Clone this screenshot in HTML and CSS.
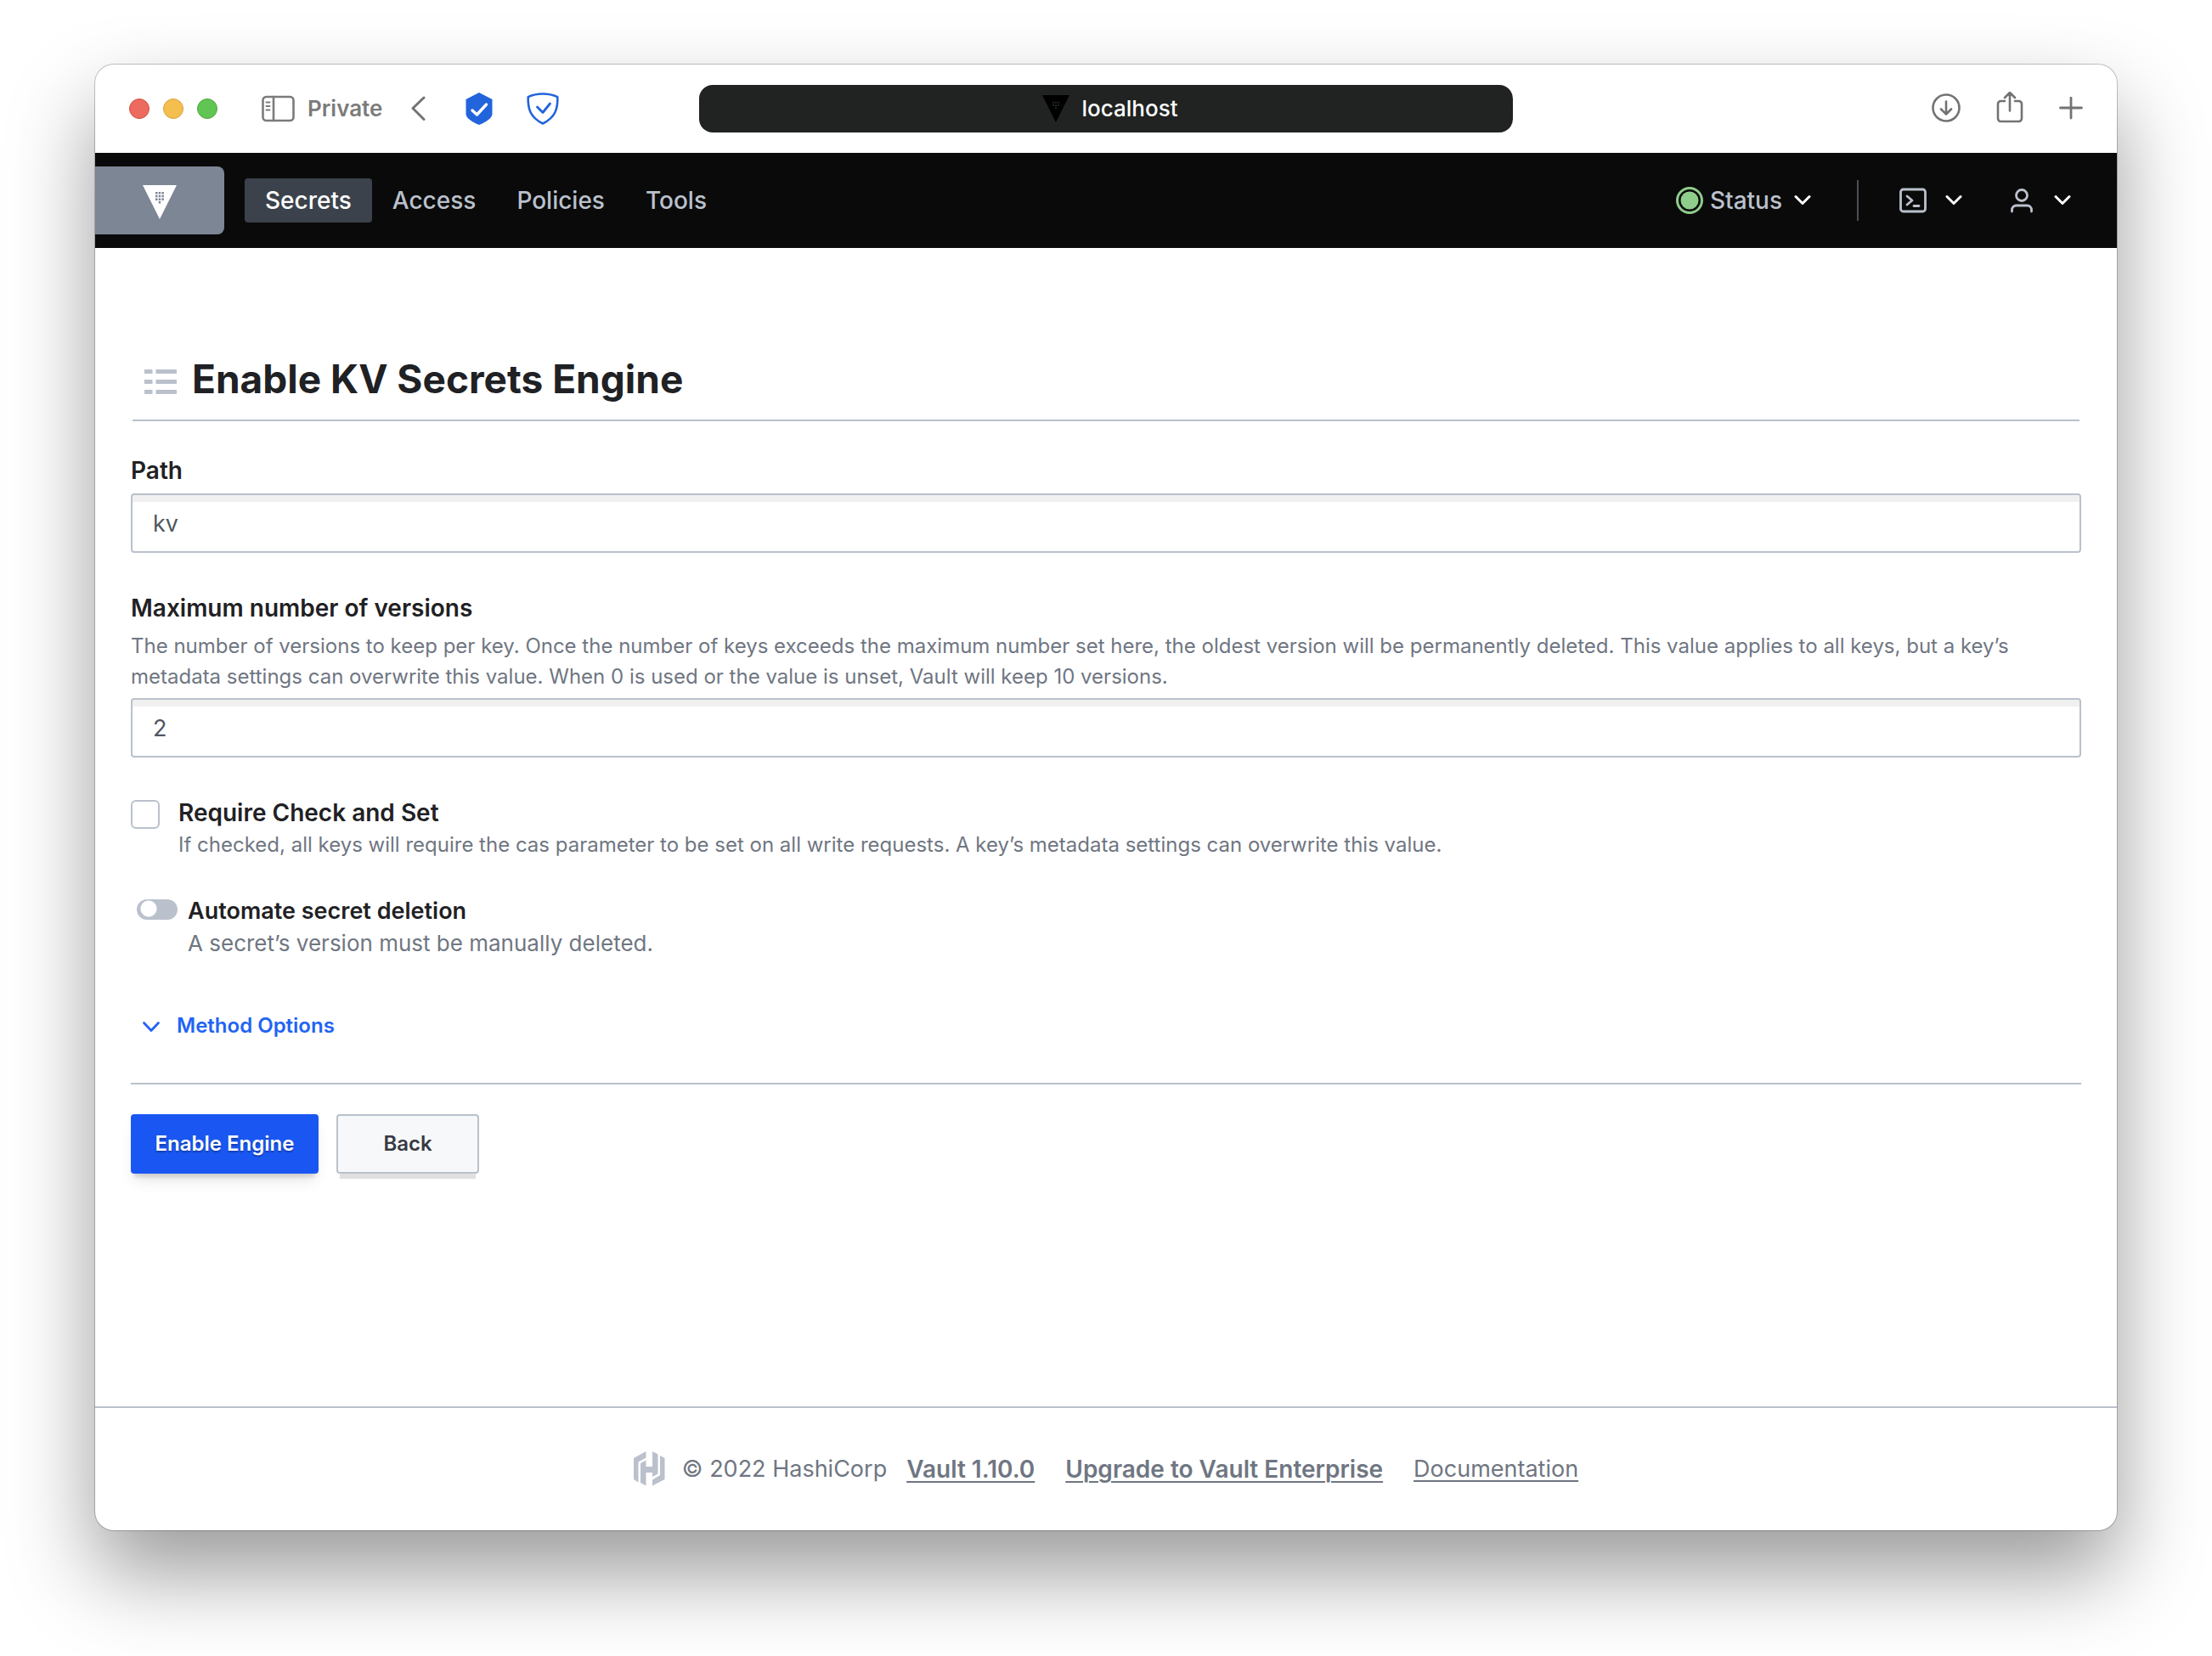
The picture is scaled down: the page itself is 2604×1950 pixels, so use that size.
FILE: index.html
```html
<!DOCTYPE html>
<html lang="en">
<head>
<meta charset="utf-8">
<meta name="viewport" content="width=device-width, initial-scale=1">
<title>Vault</title>
<link rel="stylesheet" href="styles.css">
</head>
<body>
<div class="window">
  <header class="toolbar">
    <div class="toolbar-left">
      <div class="lights"><span class="light red"></span><span class="light amber"></span><span class="light green"></span></div>
      <button class="private" type="button">
        <svg class="icon-sidebar" width="40" height="32" viewBox="0 0 40 32" fill="none" stroke="currentColor" stroke-width="2.6" stroke-linecap="round"><rect x="1.5" y="2" width="36" height="28" rx="4"/><path d="M14 2v28"/><path d="M5.500 8.500h4M5.500 13h4M5.500 17.500h4" stroke-width="2"/></svg>
        Private
      </button>
      <button class="tool back" type="button" aria-label="Go back"><svg width="18" height="32" viewBox="0 0 18 32" fill="none" stroke="currentColor" stroke-width="3" stroke-linecap="round" stroke-linejoin="round"><path d="M15 3L2 15.500l13 13"/></svg></button>
      <button class="tool shield" type="button" aria-label="Password manager"><svg width="32" height="38" viewBox="0 0 32 38"><path d="M16 0l15.500 8v17c0 5-7 9.500-15.500 13C7.500 34.500.5 30 .5 25V8z" fill="#2264dc"/><path d="M8 21l5.500 5L24.500 14" fill="none" stroke="#fff" stroke-width="3.400" stroke-linecap="round" stroke-linejoin="round"/></svg></button>
      <button class="tool shield" type="button" aria-label="Content blocker"><svg width="38" height="38" viewBox="0 0 38 38" fill="none" stroke="#2264dc" stroke-linejoin="round"><path d="M19 1.500c6 0 12 1.200 17.300 3.600.4 14-2.300 24-17.300 31.400C4 29 1.300 19 1.700 5.100 7 2.700 13 1.500 19 1.500z" stroke-width="2.600"/><path d="M12.500 17l6.500 6.500L27.500 13" stroke-width="2.800" stroke-linecap="round"/></svg></button>
    </div>
    <div class="address">
      <svg width="32" height="32" viewBox="0 0 32 32"><path d="M0 0h32L16 32z" fill="#000"/><path d="M12 8h2v2h-2zM15 8h2v2h-2zM18 8h2v2h-2zM12 11h2v2h-2zM15 11h2v2h-2zM18 11h2v2h-2zM15 14h2v2h-2z" fill="#202322"/></svg>
      <span>localhost</span>
    </div>
    <div class="toolbar-right">
      <button class="tool" type="button" aria-label="Downloads"><svg width="34" height="40" viewBox="0 0 34 40" fill="none" stroke="currentColor" stroke-width="2.600" stroke-linecap="round" stroke-linejoin="round"><circle cx="17" cy="19" r="15.500"/><path d="M17 11.500v15M11 20.500l6 6 6-6"/></svg></button>
      <button class="tool" type="button" aria-label="Share"><svg width="32" height="40" viewBox="0 0 32 40" fill="none" stroke="currentColor" stroke-width="2.600" stroke-linecap="round" stroke-linejoin="round"><path d="M10 11H5.500A3.500 3.500 0 0 0 2 14.500v17A3.500 3.500 0 0 0 5.500 35h21a3.500 3.500 0 0 0 3.500-3.500v-17a3.500 3.500 0 0 0-3.500-3.500H22M16 22.500V1.500M10 7l6-6 6 6"/></svg></button>
      <button class="tool" type="button" aria-label="New tab"><svg width="28" height="28" viewBox="0 0 28 28" fill="none" stroke="currentColor" stroke-width="2.800" stroke-linecap="round"><path d="M14 1v24M1.500 13h25"/></svg></button>
    </div>
  </header>

  <nav class="nav">
    <a class="brand" href="#" aria-label="Vault home"><svg width="40" height="40" viewBox="0 0 40 40"><path d="M0 0h40L20 40z" fill="#fff"/><path d="M15 8h2.500v2.500H15zM18.700 8h2.500v2.500h-2.500zM22.400 8h2.500v2.500h-2.500zM15 11.700h2.500v2.500H15zM18.700 11.700h2.500v2.500h-2.500zM22.400 11.700h2.500v2.500h-2.500zM15 15.400h2.500v2.500H15zM18.700 15.400h2.500v2.500h-2.500zM22.400 15.400h2.500v2.500h-2.500zM18.700 19.100h2.500v2.500h-2.500z" fill="#7d8695"/></svg></a>
    <div class="tabs">
      <a class="tab active" href="#">Secrets</a>
      <a class="tab" href="#">Access</a>
      <a class="tab" href="#">Policies</a>
      <a class="tab" href="#">Tools</a>
    </div>
    <div class="nav-right">
      <button class="menu status" type="button">
        <svg width="32" height="32" viewBox="0 0 32 32"><circle cx="16" cy="16" r="14.500" fill="none" stroke="#8fcd8b" stroke-width="3"/><circle cx="16" cy="16" r="10.500" fill="#8fcd8b"/></svg>
        <span>Status</span>
        <svg class="chevron" width="20" height="14" viewBox="0 0 20 14"><path d="M2 2.500l8 8 8-8"/></svg>
      </button>
      <button class="menu console" type="button" aria-label="Console">
        <svg width="32" height="32" viewBox="0 0 32 32" fill="none" stroke="currentColor" stroke-width="2.800" stroke-linecap="round" stroke-linejoin="round"><rect x="1.500" y="3" width="29" height="26" rx="3"/><path d="M9 11l6 5-6 5M17 22.500h6"/></svg>
        <svg class="chevron" width="20" height="14" viewBox="0 0 20 14"><path d="M2 2.500l8 8 8-8"/></svg>
      </button>
      <button class="menu user" type="button" aria-label="User menu">
        <svg width="28" height="32" viewBox="0 0 28 32" fill="none" stroke="currentColor" stroke-width="2.800" stroke-linecap="round"><circle cx="14" cy="10" r="6.500"/><path d="M2.500 29v-2a5 5 0 0 1 5-5h13a5 5 0 0 1 5 5v2"/></svg>
        <svg class="chevron" width="20" height="14" viewBox="0 0 20 14"><path d="M2 2.500l8 8 8-8"/></svg>
      </button>
    </div>
  </nav>

  <main class="content">
    <div class="page-title">
      <svg width="38" height="30" viewBox="0 0 38 30" fill="#bac1cc"><path d="M0 0h9.500v5H0zM13.500 0H38v5H13.500zM0 12h9.500v5H0zM13.500 12H38v5H13.500zM0 24h9.500v5H0zM13.500 24H38v5H13.500z"/></svg>
      <h1>Enable KV Secrets Engine</h1>
    </div>
    <form class="form">
      <div class="field">
        <label class="label" for="path">Path</label>
        <input class="input" id="path" type="text" value="kv">
      </div>
      <div class="field">
        <label class="label" for="versions">Maximum number of versions</label>
        <p class="help" id="versions-help">The number of versions to keep per key. Once the number of keys exceeds the maximum number set here, the oldest version will be permanently deleted. This value applies to all keys, but a key’s metadata settings can overwrite this value. When 0 is used or the value is unset, Vault will keep 10 versions.</p>
        <input class="input" id="versions" type="text" value="2" aria-describedby="versions-help">
      </div>
      <div class="check-row">
        <input class="checkbox" id="cas" type="checkbox">
        <div>
          <label class="label" for="cas">Require Check and Set</label>
          <p class="help">If checked, all keys will require the cas parameter to be set on all write requests. A key’s metadata settings can overwrite this value.</p>
        </div>
      </div>
      <div class="switch-row">
        <input class="switch" id="auto-delete" type="checkbox" role="switch">
        <div>
          <label class="label" for="auto-delete">Automate secret deletion</label>
          <p class="note">A secret’s version must be manually deleted.</p>
        </div>
      </div>
      <button class="options" type="button">
        <svg width="22" height="16" viewBox="0 0 22 16" fill="none" stroke="currentColor" stroke-width="2.800" stroke-linecap="round" stroke-linejoin="round"><path d="M2.500 4.500l8.500 9 8.500-9"/></svg>
        Method Options
      </button>
      <div class="actions">
        <button class="button primary" type="submit">Enable Engine</button>
        <button class="button secondary" type="button">Back</button>
      </div>
    </form>
  </main>

  <footer class="footer">
    <svg width="38" height="42" viewBox="0 0 38 42" fill="#bac1cc"><path d="M14.500 0L0 8v25l5.500 3.500v-24l9-5zM22 0v18h-7.500v-7.500L8 14v23l6.500 3.500V25H22v5l6.500-3.500v-23zM31 5v23l-9 5.500v7L36.500 33V8z"/></svg>
    <span>© 2022 HashiCorp</span>
    <a class="strong" href="#">Vault 1.10.0</a>
    <a class="strong" href="#">Upgrade to Vault Enterprise</a>
    <a href="#">Documentation</a>
  </footer>
</div>
</body>
</html>
```
FILE: styles.css
```css
* {
  box-sizing: border-box;
}

body {
  margin: 0;
  min-height: 100vh;
  display: flex;
  padding: 76px 112px 148px;
  background: #fff;
  color: #1f2124;
  font-family: Inter, "Liberation Sans", sans-serif;
  font-size: 27px;
  line-height: 36px;
}

h1,
p {
  margin: 0;
}

button {
  margin: 0;
  padding: 0;
  border: 0;
  background: none;
  color: inherit;
  font: inherit;
}

svg {
  display: block;
  flex: none;
}

.window {
  flex: 1;
  min-width: 0;
  display: flex;
  flex-direction: column;
  overflow: hidden;
  border-radius: 22px;
  background: #fff;
  box-shadow: 0 0 0 1px rgba(0, 0, 0, 0.22), 0 50px 100px rgba(0, 0, 0, 0.4);
}

/* Browser toolbar */
.toolbar {
  display: grid;
  grid-template-columns: 1fr minmax(0, 958px) 1fr;
  align-items: center;
  height: 104px;
  padding: 0 40px;
  color: #737373;
}

.toolbar-left,
.toolbar-right,
.lights,
.private {
  display: flex;
  align-items: center;
}

.lights {
  gap: 16px;
}

.light {
  width: 24px;
  height: 24px;
  border: 1px solid;
  border-radius: 50%;
}

.red {
  background: #ed6a5e;
  border-color: #d05147;
}

.amber {
  background: #f5bf4f;
  border-color: #d6a243;
}

.green {
  background: #61c554;
  border-color: #4ea73f;
}

.private {
  gap: 14px;
  margin-left: 52px;
  color: #7b7b7b;
  font-size: 26px;
  font-weight: 600;
}

.back {
  margin-left: 34px;
}

.shield {
  margin-left: 40px;
}

.back + .shield {
  margin-left: 46px;
}

.address {
  display: flex;
  align-items: center;
  justify-content: center;
  gap: 14px;
  height: 56px;
  padding-left: 10px;
  border-radius: 16px;
  background: #202322;
  color: #fff;
  font-size: 26px;
  font-weight: 500;
}

.toolbar-right {
  justify-content: flex-end;
  gap: 42px;
}

/* Application navigation */
.nav {
  display: flex;
  align-items: center;
  height: 112px;
  padding-right: 54px;
  background: #0a0a0a;
  color: #bac1cc;
  font-size: 28px;
  font-weight: 500;
}

.brand {
  display: flex;
  align-items: center;
  justify-content: center;
  width: 152px;
  height: 80px;
  padding-top: 4px;
  border-radius: 0 8px 8px 0;
  background: #7d8695;
}

.tabs {
  display: flex;
  margin-left: 24px;
}

.tab {
  padding: 8px 24px;
  border-radius: 4px;
  color: inherit;
  text-decoration: none;
}

.active {
  background: #3c424c;
  color: #fff;
}

.nav-right,
.menu {
  display: flex;
  align-items: center;
}

.nav-right {
  margin-left: auto;
}

.status {
  gap: 8px;
  padding-right: 54px;
}

.status .chevron {
  margin-left: 6px;
}

.console {
  gap: 22px;
  height: 48px;
  padding-left: 48px;
  border-left: 2px solid #4b4f57;
}

.user {
  gap: 24px;
  margin-left: 56px;
}

.chevron {
  fill: none;
  stroke: #fff;
  stroke-width: 3;
  stroke-linecap: round;
  stroke-linejoin: round;
}

/* Page */
.content {
  padding: 124px 42px 64px;
}

.page-title {
  display: flex;
  align-items: center;
  gap: 18px;
  margin: 0 2px;
  padding: 0 14px 18px;
  border-bottom: 2px solid #bac1cc;
}

.page-title svg {
  margin-top: 8px;
}

h1 {
  font-size: 46px;
  line-height: 60px;
  font-weight: 700;
}

.field {
  display: flex;
  flex-direction: column;
  margin-top: 47px;
}

.field:first-child {
  margin-top: 40px;
}

.label {
  display: block;
  font-size: 28px;
  font-weight: 600;
}

.field .label {
  margin-bottom: 9px;
}

.help {
  color: #6f7682;
  font-size: 24px;
}

.note {
  margin-top: 2px;
  color: #6f7682;
  font-size: 26px;
}

.field .help {
  margin-bottom: 7px;
}

.check-row .help {
  margin-top: 2px;
}

.input {
  width: 100%;
  height: 70px;
  padding: 0 24px;
  border: 2px solid #bac1cc;
  border-radius: 4px;
  background: #fff;
  box-shadow: inset 0 8px 1px #f0f0f0;
  color: #525761;
  font: inherit;
}

.check-row {
  display: flex;
  gap: 22px;
  margin-top: 47px;
}

.checkbox {
  appearance: none;
  flex: none;
  width: 34px;
  height: 34px;
  margin: 3px 0 0;
  border: 2px solid #bac1cc;
  border-radius: 6px;
}

.switch-row {
  display: flex;
  gap: 12px;
  margin-top: 42px;
  padding-left: 7px;
}

.switch-row .label {
  font-size: 27px;
}

.switch {
  appearance: none;
  flex: none;
  width: 48px;
  height: 24px;
  margin: 4px 0 0;
  border-radius: 12px;
  background: radial-gradient(circle at 14px 11px, #fff 9px, transparent 10px) #bac1cc;
}

.options {
  display: flex;
  align-items: center;
  gap: 19px;
  margin: 61px 0 49px;
  padding-left: 13px;
  color: #2163f6;
  font-size: 24px;
  font-weight: 600;
}

.actions {
  display: flex;
  gap: 21px;
  padding-top: 35px;
  border-top: 2px solid #bac1cc;
}

.button {
  height: 70px;
  border-radius: 4px;
  font-size: 24px;
  font-weight: 600;
}

.primary {
  min-width: 221px;
  background: #1a57f2;
  box-shadow: 0 8px 4px -4px rgba(0, 0, 0, 0.12), 0 12px 16px -4px rgba(0, 0, 0, 0.1);
  color: #fff;
  text-shadow: 0 2px 2px rgba(0, 0, 0, 0.3);
}

.secondary {
  min-width: 168px;
  border: 2px solid #bac1cc;
  background: #f7f8fa;
  box-shadow: 0 10px 1px -4px #e0e0e0;
  color: #373a42;
}

/* Footer */
.footer {
  display: flex;
  align-items: center;
  justify-content: center;
  gap: 36px;
  height: 146px;
  margin-top: auto;
  border-top: 2px solid #bac1cc;
  color: #6f7682;
}

.footer svg {
  margin-right: -17px;
}

.footer span {
  margin-right: -13px;
}

.footer a {
  color: inherit;
  text-decoration-thickness: 2px;
  text-underline-offset: 4px;
}

.footer .strong {
  font-size: 28px;
  font-weight: 600;
}
```
